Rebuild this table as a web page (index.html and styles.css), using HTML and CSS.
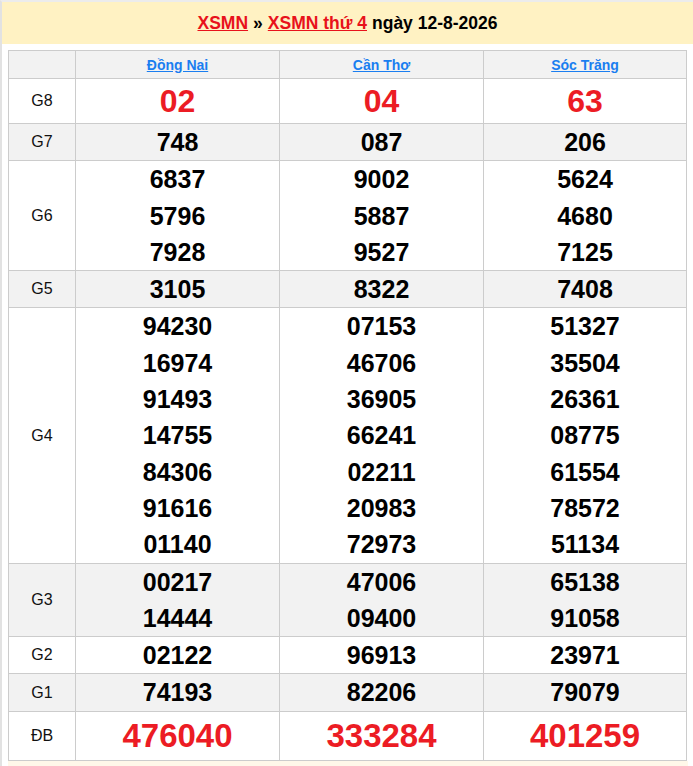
FILE: index.html
```html
<!DOCTYPE html>
<html lang="vi">
<head>
<meta charset="utf-8">
<title>XSMN thứ 4 ngày 12-8-2026</title>
<link rel="stylesheet" href="styles.css">
</head>
<body>
<div class="page">
  <h2 class="title"><a href="#">XSMN</a><span class="sep">»</span><a href="#">XSMN thứ 4</a><span class="date">ngày 12-8-2026</span></h2>
  <div class="content">
    <table class="results">
      <colgroup><col class="c-label"><col class="c-prov"><col class="c-prov"><col class="c-last"></colgroup>
      <thead>
        <tr class="head"><th></th><th><a href="#">Đồng Nai</a></th><th><a href="#">Cần Thơ</a></th><th><a href="#">Sóc Trăng</a></th></tr>
      </thead>
      <tbody>
        <tr class="g8"><td class="lbl">G8</td><td><div class="n red">02</div></td><td><div class="n red">04</div></td><td><div class="n red">63</div></td></tr>
        <tr class="alt"><td class="lbl">G7</td><td><div class="n">748</div></td><td><div class="n">087</div></td><td><div class="n">206</div></td></tr>
        <tr><td class="lbl">G6</td><td><div class="n">6837</div><div class="n">5796</div><div class="n">7928</div></td><td><div class="n">9002</div><div class="n">5887</div><div class="n">9527</div></td><td><div class="n">5624</div><div class="n">4680</div><div class="n">7125</div></td></tr>
        <tr class="alt"><td class="lbl">G5</td><td><div class="n">3105</div></td><td><div class="n">8322</div></td><td><div class="n">7408</div></td></tr>
        <tr><td class="lbl">G4</td>
          <td><div class="n">94230</div><div class="n">16974</div><div class="n">91493</div><div class="n">14755</div><div class="n">84306</div><div class="n">91616</div><div class="n">01140</div></td>
          <td><div class="n">07153</div><div class="n">46706</div><div class="n">36905</div><div class="n">66241</div><div class="n">02211</div><div class="n">20983</div><div class="n">72973</div></td>
          <td><div class="n">51327</div><div class="n">35504</div><div class="n">26361</div><div class="n">08775</div><div class="n">61554</div><div class="n">78572</div><div class="n">51134</div></td></tr>
        <tr class="alt"><td class="lbl">G3</td><td><div class="n">00217</div><div class="n">14444</div></td><td><div class="n">47006</div><div class="n">09400</div></td><td><div class="n">65138</div><div class="n">91058</div></td></tr>
        <tr><td class="lbl">G2</td><td><div class="n">02122</div></td><td><div class="n">96913</div></td><td><div class="n">23971</div></td></tr>
        <tr class="alt"><td class="lbl">G1</td><td><div class="n">74193</div></td><td><div class="n">82206</div></td><td><div class="n">79079</div></td></tr>
        <tr class="db"><td class="lbl">ĐB</td><td><div class="n red">476040</div></td><td><div class="n red">333284</div></td><td><div class="n red">401259</div></td></tr>
      </tbody>
    </table>
    <div class="next"></div>
  </div>
</div>
</body>
</html>
```
FILE: styles.css
```css
html, body {
  margin: 0;
  padding: 0;
  background: #fff;
  font-family: "Liberation Sans", Arial, sans-serif;
  color: #000;
}
.page {
  border-top: 2px solid #ececec;
  border-left: 2px solid #e2e2e2;
  min-height: 764px;
}
.title {
  margin: 0;
  height: 42px;
  background: #fff2c3;
  display: flex;
  align-items: center;
  justify-content: center;
  gap: 5px;
  font-size: 17.5px;
  font-weight: bold;
}
.title a {
  color: #e8121b;
  text-decoration: underline;
}
.content {
  padding: 6px 5px 0 6px;
}
.results {
  width: 678px;
  table-layout: fixed;
  border-collapse: collapse;
  border: 1px solid #cccccc;
}
.c-label { width: 67px; }
.c-prov { width: 204px; }
.c-last { width: 203px; }
.results th,
.results td {
  border: 1px solid #cccccc;
  padding: 0;
  text-align: center;
  vertical-align: middle;
}
.head th {
  background: #f2f2f2;
  height: 27px;
  font-size: 14px;
  font-weight: bold;
}
.head a {
  color: #1a7ef0;
  text-decoration: underline;
}
.lbl {
  font-size: 16px;
  color: #111;
}
.alt td {
  background: #f2f2f2;
}
.n {
  font-size: 25px;
  font-weight: bold;
  line-height: 36.3px;
}
.g8 .n {
  font-size: 32px;
  line-height: 44px;
}
.db .n {
  font-size: 33px;
  line-height: 48px;
}
.n.red {
  color: #ec1c24;
}
.next {
  height: 20px;
  background: #fff8e9;
}
```
